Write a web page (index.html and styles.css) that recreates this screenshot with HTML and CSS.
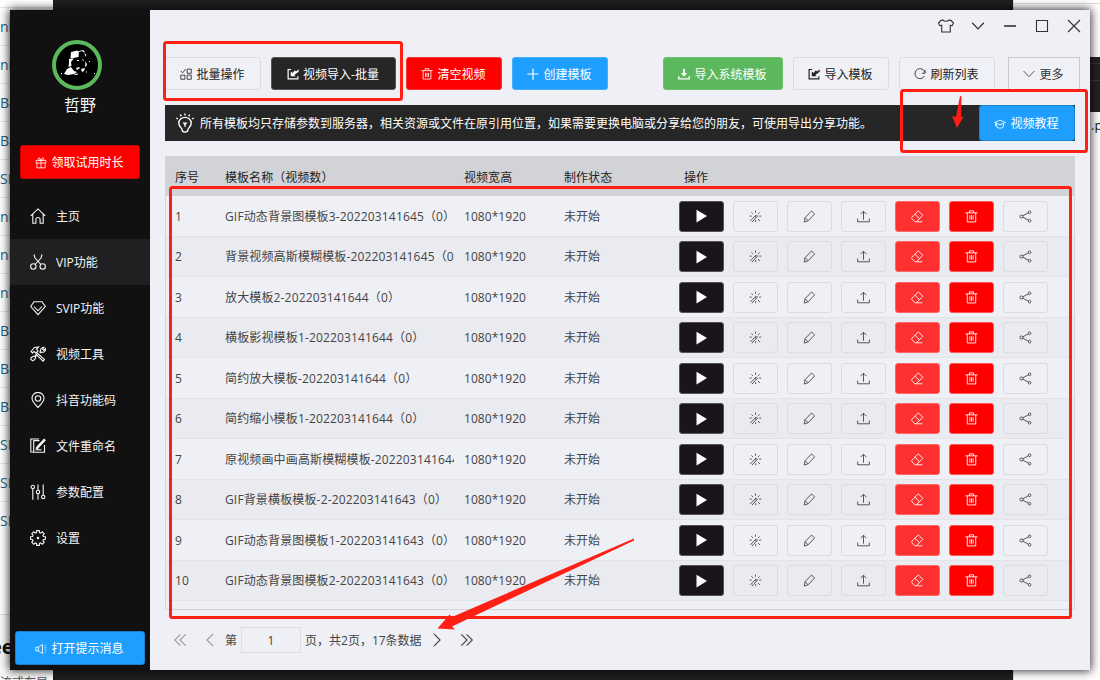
FILE: index.html
```
<!DOCTYPE html>
<html lang="zh-CN">
<head>
<meta charset="utf-8">
<title>视频模板</title>
<link rel="stylesheet" href="styles.css">
</head>
<body>
<svg class="defs" aria-hidden="true">
  <symbol id="gift" viewBox="0 0 16 16"><path d="M1.5 4.500h13v3.500h-13zM2.500 8v6.500h11V8M8 4.500v10M8 4.500C5 4.500 4 3.500 4.500 2S7 1 8 4.500C9 1 11 .5 11.500 2S11 4.500 8 4.500"/></symbol>
  <symbol id="home" viewBox="0 0 16 16"><path d="M.7 7.800 8 .9l7.300 6.900M2.800 6v9.200h3.100v-3.700c0-2.600 4.200-2.600 4.200 0v3.700h3.100V6"/></symbol>
  <symbol id="cut" viewBox="0 0 16 16"><circle cx="3.300" cy="12.500" r="2.700"/><circle cx="12.700" cy="12.500" r="2.700"/><path d="M4 .5l1 3.500 6 6.500M12 .5l-1 3.500-6 6.500"/></symbol>
  <symbol id="gem" viewBox="0 0 16 16"><path d="M4 1.800h8l3.300 4.700L8 14.700.7 6.500zM4 6.500l4 4.300 4-4.300"/></symbol>
  <symbol id="tools" viewBox="0 0 16 16"><path d="M1 5.500 4.500 1.500l4-.5-2 2 1.500 2-2 2-2-1.500-1.500 1.500zM6.500 6.500l8 7-1.500 1.700-7.500-7.500M9.500 6.500l1-1c-.5-2 1-4.500 3.500-4.300l-1.500 2 1 1 2-1.500c.4 2.500-2 4-4 3.500l-1 1M7 9l-1.500 1.500c.3 2-1 4-3 4.300l-1.800-2c.5-1.800 2.300-3 4-2.500L6 9M3 12.700h.1"/></symbol>
  <symbol id="pin" viewBox="0 0 16 16"><path d="M8 15.500C4.500 12 2 9.200 2 6.300a6 5.900 0 0 1 12 0C14 9.200 11.500 12 8 15.500z"/><circle cx="8" cy="6.500" r="2.700"/></symbol>
  <symbol id="rename" viewBox="0 0 16 16"><path d="M9.500 2.600H3.700v11.700h10.800V7M9 1H.8v13h2.500"/><path class="fat" d="M15 1.300 8 8.800 6.500 11"/><path d="M5.500 11.800h6"/></symbol>
  <symbol id="sliders" viewBox="0 0 16 16"><circle cx="2.800" cy="3" r="1.700"/><circle cx="8" cy="8" r="1.700"/><circle cx="13.200" cy="13" r="1.700"/><path d="M2.800 4.700v11M8 .5v5.800M8 9.700v6M13.200.5v10.800"/></symbol>
  <symbol id="gear" viewBox="0 0 16 16"><path d="M6.500 2.600 6.700.6h2.600l.2 2 1.100.5 1.700-1.300 1.900 1.900-1.300 1.700.5 1.100 2 .2v2.600l-2 .2-.5 1.100 1.300 1.700-1.900 1.900-1.700-1.300-1.100.5-.2 2H6.700l-.2-2-1.100-.5-1.700 1.300-1.900-1.900 1.300-1.700-.5-1.100-2-.2V6.700l2-.2.5-1.100-1.300-1.700 1.900-1.900 1.700 1.300z"/><circle class="solid" cx="8" cy="8" r="1.300"/></symbol>
  <symbol id="horn" viewBox="0 0 16 16"><path d="M1 5.500h3.500L10 2v12l-5.500-3.500H1zM4.500 5.500v5M13 3.500l1.500-1M13 6.500h2M13 9.500h2M13 12.500l1.500 1"/></symbol>
  <symbol id="batch" viewBox="0 0 16 16"><path d="M9.500 1.500h5.500V7H9.500zM1 9.500h5.500V15H1zM9.500 9.500H15V15H9.500zM1 4l2.500 2.500L7.500 1.500"/></symbol>
  <symbol id="import" viewBox="0 0 16 16"><path class="mid" d="M5.500 2H1.500v12.500h13V11"/><path class="solid" d="M5 4.500v6.500h6.500L9.700 9.200 15.500 5V1.500L12 4.500 10.500 3 7.500 6.800z"/></symbol>
  <symbol id="trash" viewBox="0 0 16 16"><path d="M.5 3.500h15M5.500 3.500V1h5v2.500M2.800 3.500v11.200h10.400V3.500M6 6.500v5.500M8 6.500v5.500M10 6.500v5.500"/></symbol>
  <symbol id="plus" viewBox="0 0 16 16"><path class="mid" d="M8 .5v15M.5 8h15"/></symbol>
  <symbol id="download" viewBox="0 0 16 16"><path class="mid" d="M1 10.500V14.500h14v-4"/><path class="solid" d="M6.800 1h2.400v5.500h3L8 11.500 3.800 6.500h3z"/></symbol>
  <symbol id="reload" viewBox="0 0 16 16"><path d="M14 10.500A6.700 6.700 0 1 1 14.500 6M14.800 2.500V7h-4.300"/></symbol>
  <symbol id="down" viewBox="0 0 16 16"><path d="M.8 4 8 11.500 15.200 4"/></symbol>
  <symbol id="cap" viewBox="0 0 16 16"><path d="M.8 6 8 3l7.200 3L8 9zM3.500 7.500V12c2.500 2.200 6.500 2.200 9 0V7.500M2 6.500v4"/></symbol>
  <symbol id="bulb" viewBox="0 0 20 20"><path class="bulb-line" d="M7.200 17c0-2.200-3.400-3-3.400-7a6.200 5.600 0 0 1 12.400 0c0 4-3.400 4.800-3.400 7 0 2.800-5.600 2.800-5.600 0zM10 .5v2M5.300 1.500l1 1.800M14.700 1.500l-1 1.800M1.200 5l1.800 1M18.800 5 17 6"/><path class="solid" d="M7.500 9.500h5L10.600 12v2H9.400v-2z"/></symbol>
  <symbol id="play" viewBox="0 0 16 16"><path class="solid" d="M2.500 1.800v12.700L13 8.100z"/></symbol>
  <symbol id="magic" viewBox="0 0 16 16"><path d="M1.500 13.500 9 6l1.500 1.500L3.500 15M7.500 7.500l1.500 1.700M8 .8v2.500M3 3l1.800 1.800M13 3l-1.800 1.800M.8 7.500h2.500M12.500 7.500H15M11 11l2.500 2.500M8.300 12.500V15"/></symbol>
  <symbol id="edit" viewBox="0 0 16 16"><path d="M1.500 14.800 2.500 9.500 10.500 1.200 14.300 4.800 6.300 13.300zM2.500 9.500 6.300 13.300"/></symbol>
  <symbol id="upload" viewBox="0 0 16 16"><path d="M8 12V1.500M4.500 5 8 1.500 11.500 5M.8 10.500v4h14.400v-4"/></symbol>
  <symbol id="eraser" viewBox="0 0 16 16"><path d="M1 9 9 1l5.500 5.500-8 8H4.800L1 10.500zM4.800 5.200l5.700 5.500M6.500 14.500H14"/></symbol>
  <symbol id="share" viewBox="0 0 16 16"><circle cx="3" cy="8" r="1.900"/><circle cx="13" cy="2.800" r="1.600"/><circle cx="13" cy="13.200" r="1.600"/><path d="M4.700 7.200l6.800-3.700M4.700 8.800l6.800 3.700"/></symbol>
  <symbol id="shirt" viewBox="0 0 16 16"><path d="M5 2c1 1.700 5 1.700 6 0l2.200.6L15.500 5l-1.300 2.700-1.900-.4V14H3.700V7.300l-1.900.4L.5 5l2.300-2.400z"/></symbol>
  <symbol id="minus" viewBox="0 0 16 16"><path class="mid" d="M2 8h12"/></symbol>
  <symbol id="square" viewBox="0 0 16 16"><path d="M2.500 2.500h11v11h-11z"/></symbol>
  <symbol id="close" viewBox="0 0 16 16"><path d="M2 2l12 12M14 2 2 14"/></symbol>
  <symbol id="prev" viewBox="0 0 16 16"><path d="M11.500 1 4.500 8l7 7"/></symbol>
  <symbol id="next" viewBox="0 0 16 16"><path d="M4.500 1l7 7-7 7"/></symbol>
  <symbol id="first" viewBox="0 0 16 16"><path d="M8.500 1.500 2 8l6.500 6.500M14.500 1.500 8 8l6.500 6.500"/></symbol>
  <symbol id="last" viewBox="0 0 16 16"><path d="M1.500 1.500 8 8l-6.500 6.500M7.500 1.500 14 8l-6.500 6.500"/></symbol>
</svg>

<div class="desktop">
  <div class="page-left">
    <ul class="links">
      <li>nl</li><li>nl</li><li>Ba</li><li>Ba</li><li>SI</li><li>nl</li><li>nl</li>
      <li>nl</li><li>Ba</li><li>Ba</li><li>Ba</li><li>SI</li><li>SI</li><li>SI</li>
    </ul>
    <div class="page-foot"><b>ee</b><span>流式布局</span></div>
  </div>
  <div class="page-right"><div class="dark-strip"></div><p>.p</p></div>
</div>

<div class="window">
  <aside class="sidebar">
    <svg class="avatar" viewBox="0 0 50 50"><circle cx="25" cy="25" r="23"/><path d="M19 12l6-1.500 2 1-.5 5.500-8 1.500zM17 19l5-.5-3 3.500.5 4-3 1 .5-4zM15 29l4-2 3 4 3 1-3 2-6 1-4-1zM27 11l4-1 2 2-1 .5-2-1.500-3 1zM33 13l1.500 3-1 .500-1-3zM25 20h2v1h-2zM30 19l2 1-1 1zM33 21l2 3-1 3-1-1 .500-2zM24 28l3-1 1 1-3 2zM29 29l4-1-1 3-2 1zM22 34l4-.500v1l-3 .500zM37 21h1v1h-1zM42 33h1v1h-1zM34 31l1 1-1 1zM9 33h1v1H9z"/></svg>
    <div class="user">哲野</div>
    <button class="btn red trial"><svg><use href="#gift"/></svg>领取试用时长</button>
    <nav>
      <a><svg><use href="#home"/></svg>主页</a>
      <a class="active"><svg><use href="#cut"/></svg>VIP功能</a>
      <a><svg><use href="#gem"/></svg>SVIP功能</a>
      <a><svg><use href="#tools"/></svg>视频工具</a>
      <a><svg><use href="#pin"/></svg>抖音功能码</a>
      <a><svg><use href="#rename"/></svg>文件重命名</a>
      <a><svg><use href="#sliders"/></svg>参数配置</a>
      <a><svg><use href="#gear"/></svg>设置</a>
    </nav>
    <button class="btn blue notice"><svg><use href="#horn"/></svg>打开提示消息</button>
  </aside>
  <main>
    <div class="titlebar">
      <svg><use href="#shirt"/></svg>
      <svg class="small"><use href="#down"/></svg>
      <svg><use href="#minus"/></svg>
      <svg><use href="#square"/></svg>
      <svg><use href="#close"/></svg>
    </div>
    <div class="toolbar">
      <button class="btn w96"><svg><use href="#batch"/></svg>批量操作</button>
      <button class="btn dark w125"><svg><use href="#import"/></svg>视频导入-批量</button>
      <button class="btn red w96"><svg><use href="#trash"/></svg>清空视频</button>
      <button class="btn blue w96"><svg><use href="#plus"/></svg>创建模板</button>
      <button class="btn green w120"><svg><use href="#download"/></svg>导入系统模板</button>
      <button class="btn w96"><svg><use href="#import"/></svg>导入模板</button>
      <button class="btn w96"><svg><use href="#reload"/></svg>刷新列表</button>
      <button class="btn more"><svg><use href="#down"/></svg>更多</button>
    </div>
    <div class="tip">
      <svg><use href="#bulb"/></svg>
      <span>所有模板均只存储参数到服务器，相关资源或文件在原引用位置，如果需要更换电脑或分享给您的朋友，可使用导出分享功能。</span>
      <button class="btn blue w96"><svg><use href="#cap"/></svg>视频教程</button>
    </div>
    <section class="table">
      <div class="row head"><span>序号</span><span>模板名称（视频数）</span><span>视频宽高</span><span>制作状态</span><span>操作</span></div>
      <div id="rows"></div>
    </section>
    <footer class="pager">
      <svg class="off"><use href="#first"/></svg>
      <svg class="off prev"><use href="#prev"/></svg>
      <span class="label">第</span>
      <span class="page-input">1</span>
      <span class="summary">页，共2页，17条数据</span>
      <svg><use href="#next"/></svg>
      <svg class="last"><use href="#last"/></svg>
    </footer>
  </main>
</div>

<svg class="marks" viewBox="0 0 1100 680">
  <rect x="164.500" y="42.500" width="237" height="57" rx="2"/>
  <rect x="901.500" y="90.500" width="185" height="61" rx="2"/>
  <rect x="170.500" y="187.500" width="900" height="430" rx="2"/>
  <path d="M960 96l1.500.5L961 117l2.500-.500L957 128 952 116l4 1z"/>
  <path d="M634 538.500 452 617l-2.500-2.500L437.500 628.500 455 629.500 452 626.500 634 540.500z"/>
</svg>
<script src="app.js"></script>
</body>
</html>
```

FILE: styles.css
```
* { box-sizing: border-box; }
body {
  margin: 0;
  width: 1100px;
  height: 680px;
  position: relative;
  overflow: hidden;
  background: #1f1f1f;
  color: #444;
  font: 12px/16px "Open Sans", "Noto Sans CJK SC", sans-serif;
}
.defs { display: none; }
svg { fill: none; stroke: currentColor; stroke-width: 1.1; flex: none; }
.solid { fill: currentColor; stroke: none; }
.mid { stroke-width: 1.6; }
.bulb-line { stroke-width: 1.4; }
.fat { stroke-width: 2.5; }

.desktop { display: flex; justify-content: space-between; height: 680px; }
.page-left { width: 53px; background: #fff; }
.page-right { width: 87px; background: #fff; padding-top: 3px; border-left: 1px solid #ddd; }
.page-right::before { content: ""; display: block; border-top: 1px solid #ddd; height: 53px; }
.dark-strip { height: 55px; background: linear-gradient(#222 6px, #3a3a3a 6px 7px, #222 7px 23px, #3a3a3a 23px 24px, #222 24px); }
.page-right p { margin: 5px 0 0 77px; color: #111; font-size: 13px; white-space: nowrap; }
.links { list-style: none; margin: 0; padding: 7px 0 0; }
.links li { height: 38px; line-height: 37px; border-top: 1px solid #e4e6e8; color: #17648b; font-size: 14px; }
.page-foot {
  margin-top: 75px;
  height: 66px;
  padding-top: 20px;
  border-top: 1px solid #ddd;
  background: #fafafa;
  color: #111;
  overflow: hidden;
  white-space: nowrap;
}
.page-foot b { display: block; height: 40px; font-size: 20px; line-height: 24px; margin-left: -10px; }
.page-foot span { color: #555; line-height: 14px; }

.window {
  position: absolute;
  left: 10px;
  top: 10px;
  width: 1080px;
  height: 660px;
  display: flex;
  background: #eff0f5;
  box-shadow: 0 0 9px 1px rgba(0, 0, 0, .8);
}
.sidebar { width: 140px; background: #111; color: #f5f5f5; display: flex; flex-direction: column; align-items: center; }
.avatar { width: 50px; height: 50px; margin: 30px 6px 0 0; }
.avatar circle { fill: #000; stroke: #5cb85c; stroke-width: 4; }
.avatar path { fill: #fff; stroke: none; }
.user { font-size: 16px; line-height: 22px; margin-top: 4px; }

.btn {
  display: flex;
  align-items: center;
  justify-content: center;
  gap: 4px;
  height: 33px;
  padding: 2px 1px 0 0;
  border: 1px solid #dcdcde;
  border-radius: 3px;
  background: #f0f1f6;
  color: #222;
  font: inherit;
  white-space: nowrap;
}
.btn svg { width: 12px; height: 12px; margin-top: -1px; }
.btn.red { background: #f00; border-color: #f43333; color: #fff; }
.btn.blue { background: #1e9fff; border-color: #45adfa; color: #fff; }
.btn.green { background: #5cb85c; border-color: #6dc06d; color: #fff; }
.btn.dark { background: #262626; border-color: #555; color: #fff; }
.sidebar .trial { width: 120px; height: 34px; margin-top: 29px; border-color: #c60505; }
.sidebar .notice { width: 130px; height: 34px; margin: auto 0 5px; border-color: #1b7fc9; }
nav { align-self: stretch; margin-top: 14px; }
nav a { display: flex; align-items: center; gap: 10px; height: 46px; padding: 2px 0 0 20px; }
nav a.active { background: #202022; }
nav svg { width: 16px; height: 16px; margin-top: -2px; }

main { width: 940px; padding: 0 10px 0 15px; }
.titlebar { display: flex; justify-content: flex-end; gap: 16px; padding-top: 8px; height: 47px; margin-right: -2px; }
.titlebar svg { width: 16px; height: 16px; color: #333; }
.titlebar .small { padding: 1.5px; stroke-width: 1.5; }
.toolbar { display: flex; gap: 10px; }
.toolbar .green { margin-left: 45px; }
.toolbar .more { width: 72px; border-radius: 0; border-color: #c9cacd; margin-left: 3px; color: #333; }
.w96 { width: 96px; }
.w120 { width: 120px; }
.w125 { width: 125px; }
.tip {
  display: flex;
  align-items: center;
  width: 910px;
  height: 36px;
  margin-top: 15px;
  padding-left: 10px;
  gap: 4px;
  background: #262626;
  color: #fff;
  white-space: nowrap;
}
.tip > svg { width: 20px; height: 20px; }
.tip span { padding: 2px 0 0 1px; }
.tip .btn { height: 36px; margin-left: auto; border-color: #1b84d4; }

.table { width: 910px; height: 454px; margin-top: 15px; border: 1px solid #d4d5d8; border-top: 0; }
.row {
  display: grid;
  grid-template-columns: 50px 239px 100px 115px 1fr;
  align-items: center;
  height: 40.5px;
  padding-left: 9px;
  border-bottom: 1px solid #e3e4e8;
}
.row > span { padding-top: 2px; letter-spacing: .05px; }
.row:nth-child(even) { background: #eaebf0; }
.row.head { height: 40px; background: #d2d3d7; color: #222; border: 0; }
.row.head span { padding-top: 3px; }
.head span:last-child { padding-left: 5px; }
.row > .name { width: 229px; overflow: hidden; white-space: nowrap; letter-spacing: .15px; }
.actions { display: flex; gap: 9px; padding-top: 1px; }
.actions .btn { width: 45px; height: 31px; padding: 0; background: transparent; color: #444; }
.actions .btn svg { width: 13px; height: 13px; margin: 0; }
.actions .btn.play { background: #19151b; border: 1px solid #55525a; color: #fff; }
.actions .btn.play svg { width: 16px; height: 16px; }
.actions .btn.erase { background: #ff3030; border-color: #f66; color: #fff; }
.actions .btn.del { background: #f00; border-color: #f55; color: #fff; }

.pager { display: flex; align-items: center; height: 26px; margin-top: 17px; padding-left: 8px; }
.pager svg { width: 14px; height: 14px; stroke-width: 1.3; }
.pager .off { color: #999; }
.pager .prev { margin-left: 16px; }
.pager .label { margin-left: 8px; padding-top: 2px; }
.page-input { width: 60px; height: 26px; margin: 0 4px; border: 1px solid #dcdde0; text-align: center; line-height: 26px; }
.summary { width: 125px; padding-top: 2px; white-space: nowrap; }
.pager .last { margin-left: 16px; }

.marks { position: absolute; left: 0; top: 0; width: 1100px; height: 680px; pointer-events: none; }
.marks rect { stroke: #ff1f14; stroke-width: 3; }
.marks path { fill: #ff1f14; stroke: none; }
```

FILE: app.js
```
const templates = [
  "GIF动态背景图模板3-202203141645（0）",
  "背景视频高斯模糊模板-202203141645（0）",
  "放大模板2-202203141644（0）",
  "横板影视模板1-202203141644（0）",
  "简约放大模板-202203141644（0）",
  "简约缩小模板1-202203141644（0）",
  "原视频画中画高斯模糊模板-202203141644",
  "GIF背景横板模板-2-202203141643（0）",
  "GIF动态背景图模板1-202203141643（0）",
  "GIF动态背景图模板2-202203141643（0）"
];
const actions = [
  ["play", "play"], ["magic", ""], ["edit", ""], ["upload", ""],
  ["eraser", "erase"], ["trash", "del"], ["share", ""]
];
const buttons = actions
  .map(([icon, cls]) => `<button class="btn ${cls}"><svg><use href="#${icon}"/></svg></button>`)
  .join("");
document.getElementById("rows").innerHTML = templates
  .map((name, i) => `<div class="row"><span>${i + 1}</span><span class="name">${name}</span><span>1080*1920</span><span>未开始</span><div class="actions">${buttons}</div></div>`)
  .join("");
```
